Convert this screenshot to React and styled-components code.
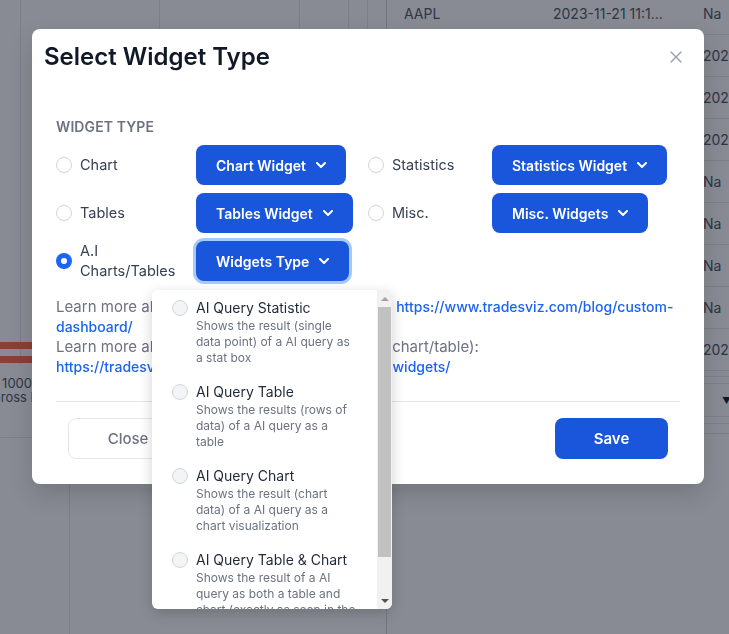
import React from 'react'
import styled, { createGlobalStyle } from 'styled-components'

const GlobalStyle = createGlobalStyle`
  * { box-sizing: border-box; }
  html, body { margin: 0; padding: 0; }
  body {
    font-family: Inter, "Noto Sans", sans-serif;
    background: #ffffff;
    overflow: hidden;
  }
`

const tableRows = [
  ['AAPL', '2023-11-21 11:1...', 'Na'],
  ['MSFT', '2023-11-20 09:3...', '2023'],
  ['TSLA', '2023-11-17 14:0...', '2023'],
  ['NVDA', '2023-11-16 10:2...', '2023'],
  ['AMZN', '2023-11-15 13:4...', 'Na'],
  ['SPY', '2023-11-14 09:5...', 'Na'],
  ['QQQ', '2023-11-13 15:1...', 'Na'],
  ['META', '2023-11-10 11:0...', 'Na'],
  ['AMD', '2023-11-09 10:4...', '2023'],
]

const aiWidgets = [
  { title: 'AI Query Statistic', desc: 'Shows the result (single data point) of a AI query as a stat box' },
  { title: 'AI Query Table', desc: 'Shows the results (rows of data) of a AI query as a table' },
  { title: 'AI Query Chart', desc: 'Shows the result (chart data) of a AI query as a chart visualization' },
  { title: 'AI Query Table & Chart', desc: 'Shows the result of a AI query as both a table and chart (exactly as seen in the AI query page)' },
]

function Chevron() {
  return (
    <svg width="10" height="6" viewBox="0 0 10 6" fill="none">
      <path d="M1 1l4 4 4-4" stroke="#fff" strokeWidth="2" strokeLinecap="round" strokeLinejoin="round" />
    </svg>
  )
}

function App() {
  return (
    <>
      <GlobalStyle />
      <Page>
        <LeftPane>
          <svg width="386" height="437" viewBox="0 0 386 437">
            {[20, 159, 299, 348, 367].map((x) => (
              <line key={x} x1={x + 0.5} y1="0" x2={x + 0.5} y2="366" stroke="#e5e7eb" />
            ))}
            <rect x="0" y="342" width="140" height="7" fill="#ff6b3d" />
            <rect x="0" y="356" width="110" height="7" fill="#ff6b3d" />
            <text x="32" y="388" textAnchor="end" fontSize="13" fontFamily="Inter" fill="#4b5563">1000</text>
            <text x="-9" y="402" fontSize="13" fontFamily="Inter" fill="#4b5563">Gross Profit</text>
          </svg>
          <LowerPanel>
            <LowerCell />
            <div />
          </LowerPanel>
        </LeftPane>
        <TablePane>
          {tableRows.map((r, i) => (
            <TableRow key={i} $clipped={i === 0}>
              {r.map((c, j) => <Cell key={j}>{c}</Cell>)}
            </TableRow>
          ))}
          <TableRule $h={6} />
          <TableRule $h={7} />
          <Pager><span>▼</span></Pager>
          <TableRule $h={7} />
          <TableRule $h={10} />
        </TablePane>
      </Page>

      <Overlay>
        <Modal>
          <Header>
            <Title>Select Widget Type</Title>
            <CloseIcon width="12" height="12" viewBox="0 0 12 12">
              <path d="M1 1l10 10M11 1L1 11" stroke="#9ca3af" strokeWidth="1.5" strokeLinecap="round" />
            </CloseIcon>
          </Header>
          <Body>
            <SectionLabel>Widget Type</SectionLabel>
            <OptionGrid>
              <RadioLabel><Radio /><span>Chart</span></RadioLabel>
              <WidgetButton>Chart Widget<Chevron /></WidgetButton>
              <RadioLabel><Radio /><span>Statistics</span></RadioLabel>
              <WidgetButton>Statistics Widget<Chevron /></WidgetButton>

              <RadioLabel><Radio /><span>Tables</span></RadioLabel>
              <WidgetButton>Tables Widget<Chevron /></WidgetButton>
              <RadioLabel><Radio /><span>Misc.</span></RadioLabel>
              <WidgetButton>Misc. Widgets<Chevron /></WidgetButton>

              <RadioLabel><Radio $checked /><span>A.I Charts/Tables</span></RadioLabel>
              <DropAnchor>
                <WidgetButton $focused>Widgets Type<Chevron /></WidgetButton>
                <Dropdown>
                  <OptionList>
                    {aiWidgets.map((w) => (
                      <OptionItem key={w.title}>
                        <ListRadio />
                        <div>
                          <OptionTitle>{w.title}</OptionTitle>
                          <OptionDesc>{w.desc}</OptionDesc>
                        </div>
                      </OptionItem>
                    ))}
                  </OptionList>
                  <ScrollTrack>
                    <ScrollArrow $up />
                    <ScrollThumb />
                    <ScrollArrow />
                  </ScrollTrack>
                </Dropdown>
              </DropAnchor>
            </OptionGrid>

            <Help>
              <HelpLine>
                Learn more about customizing dashboard here: <HelpLink>https://www.tradesviz.com/blog/custom-</HelpLink>
              </HelpLine>
              <HelpLine><HelpLink>dashboard/</HelpLink></HelpLine>
              <HelpLine>Learn more about the AI widgets (AI query stat/chart/table):</HelpLine>
              <HelpLine><HelpLink>https://tradesviz.com/blog/new-custom-ai-query-widgets/</HelpLink></HelpLine>
            </Help>

            <Divider />
            <Footer>
              <CloseButton>Close</CloseButton>
              <SaveButton>Save</SaveButton>
            </Footer>
          </Body>
        </Modal>
      </Overlay>
    </>
  )
}

export default App

const Page = styled.div`
  display: flex;
  width: 729px;
  height: 634px;
  overflow: hidden;
`

const LeftPane = styled.div`
  width: 386px;
  flex-shrink: 0;
  display: flex;
  flex-direction: column;
  svg { display: block; }
`

const LowerPanel = styled.div`
  flex: 1;
  display: grid;
  grid-template-columns: 70px 1fr;
  border-top: 1px solid #e5e7eb;
`

const LowerCell = styled.div`
  border-right: 1px solid #e5e7eb;
`

const TablePane = styled.div`
  flex: 1;
  border-left: 1px solid #d1d5db;
`

const TableRow = styled.div`
  display: grid;
  grid-template-columns: 149px 150px 1fr;
  align-items: center;
  height: ${(p) => (p.$clipped ? '35px' : '42px')};
  padding-bottom: ${(p) => (p.$clipped ? '7px' : '0')};
  border-bottom: 1px solid #e5e7eb;
  font-size: 14px;
  color: #4b5563;
`

const Cell = styled.div`
  padding-left: 17px;
  white-space: nowrap;
  overflow: hidden;
`

const TableRule = styled.div`
  height: ${(p) => p.$h}px;
  border-bottom: 1px solid #e5e7eb;
`

const Pager = styled.div`
  height: 33px;
  border-bottom: 1px solid #e5e7eb;
  display: flex;
  align-items: center;
  justify-content: flex-end;
  font-size: 9px;
  color: #111827;
  span { margin-right: -2px; }
`

const Overlay = styled.div`
  position: fixed;
  inset: 0;
  background: rgba(17, 24, 39, 0.5);
  padding: 29px 0 0 32px;
`

const Modal = styled.div`
  width: 672px;
  background: #ffffff;
  border-radius: 8px;
  box-shadow: 0 10px 25px rgba(0, 0, 0, 0.15);
`

const Header = styled.div`
  display: flex;
  align-items: center;
  justify-content: space-between;
  padding: 12px 22px 20px 12px;
`

const Title = styled.h3`
  margin: 0;
  font-size: 24px;
  line-height: 32px;
  font-weight: 600;
  color: #111827;
`

const CloseIcon = styled.svg`
  display: block;
`

const Body = styled.div`
  padding: 24px 24px 25px;
`

const SectionLabel = styled.div`
  font-size: 14px;
  line-height: 20px;
  font-weight: 600;
  color: #6b7280;
  text-transform: uppercase;
  letter-spacing: 0.1px;
`

const OptionGrid = styled.div`
  display: grid;
  grid-template-columns: 140px 172px 124px auto;
  row-gap: 8px;
  align-items: center;
  margin-top: 8px;
`

const RadioLabel = styled.label`
  display: flex;
  align-items: center;
  gap: 8px;
  font-size: 14.5px;
  line-height: 20px;
  color: #374151;
  padding-right: 16px;
`

const Radio = styled.span`
  flex-shrink: 0;
  width: 16px;
  height: 16px;
  border-radius: 50%;
  border: ${(p) => (p.$checked ? 'none' : '1px solid #d1d5db')};
  background: ${(p) => (p.$checked ? '#1c64f2' : '#ffffff')};
  display: flex;
  align-items: center;
  justify-content: center;
  &::after {
    content: '';
    display: ${(p) => (p.$checked ? 'block' : 'none')};
    width: 6px;
    height: 6px;
    border-radius: 50%;
    background: #ffffff;
  }
`

const WidgetButton = styled.button`
  justify-self: start;
  display: inline-flex;
  align-items: center;
  gap: 10px;
  height: 40px;
  padding: 0 20px;
  border: none;
  border-radius: 8px;
  background: #1a56db;
  color: #ffffff;
  font-family: inherit;
  font-size: 14px;
  font-weight: 600;
  white-space: nowrap;
  box-shadow: ${(p) => (p.$focused ? '0 0 0 3px #a4cafe' : 'none')};
`

const DropAnchor = styled.div`
  position: relative;
  justify-self: start;
  display: flex;
`

const Dropdown = styled.div`
  position: absolute;
  top: calc(100% + 9px);
  left: -44px;
  width: 240px;
  height: 319px;
  z-index: 5;
  display: flex;
  background: #ffffff;
  border-radius: 6px;
  overflow: hidden;
  box-shadow: 0 4px 14px rgba(0, 0, 0, 0.18);
`

const OptionList = styled.div`
  flex: 1;
  overflow: hidden;
`

const OptionItem = styled.div`
  display: grid;
  grid-template-columns: 16px 160px;
  column-gap: 8px;
  padding: 8px 0 8px 20px;
`

const ListRadio = styled.span`
  width: 16px;
  height: 16px;
  margin-top: 2px;
  border-radius: 50%;
  border: 1px solid #d1d5db;
  background: #f3f4f6;
`

const OptionTitle = styled.div`
  font-size: 14px;
  line-height: 20px;
  color: #1f2937;
  white-space: nowrap;
`

const OptionDesc = styled.div`
  font-size: 12px;
  line-height: 16px;
  color: #6b7280;
`

const ScrollTrack = styled.div`
  width: 15px;
  flex-shrink: 0;
  background: #f1f1f1;
  display: flex;
  flex-direction: column;
  padding: 0 1px;
`

const ScrollArrow = styled.div`
  height: 17px;
  display: flex;
  align-items: center;
  justify-content: center;
  margin-top: ${(p) => (p.$up ? '0' : 'auto')};
  &::before {
    content: '';
    width: 0;
    height: 0;
    border-left: 4px solid transparent;
    border-right: 4px solid transparent;
    ${(p) => (p.$up ? 'border-bottom: 4px solid #a3a3a3;' : 'border-top: 4px solid #505050;')}
  }
`

const ScrollThumb = styled.div`
  height: 250px;
  background: #c1c1c1;
`

const Help = styled.div`
  margin-top: 16px;
  font-size: 15px;
  line-height: 20px;
  color: #6b7280;
`

const HelpLine = styled.div`
  white-space: nowrap;
`

const HelpLink = styled.a`
  color: #1c64f2;
  font-size: 14px;
  font-weight: 500;
  text-decoration: none;
`

const Divider = styled.hr`
  margin: 24px 0 0;
  border: none;
  border-top: 1px solid #e5e7eb;
`

const Footer = styled.div`
  display: flex;
  justify-content: space-between;
  padding: 16px 12px 0;
`

const CloseButton = styled.button`
  width: 120px;
  height: 41px;
  border: 1px solid #e5e7eb;
  border-radius: 8px;
  background: #ffffff;
  color: #6b7280;
  font-family: inherit;
  font-size: 15px;
  font-weight: 500;
`

const SaveButton = styled.button`
  width: 113px;
  height: 41px;
  border: none;
  border-radius: 8px;
  background: #1a56db;
  color: #ffffff;
  font-family: inherit;
  font-size: 15px;
  font-weight: 600;
`
